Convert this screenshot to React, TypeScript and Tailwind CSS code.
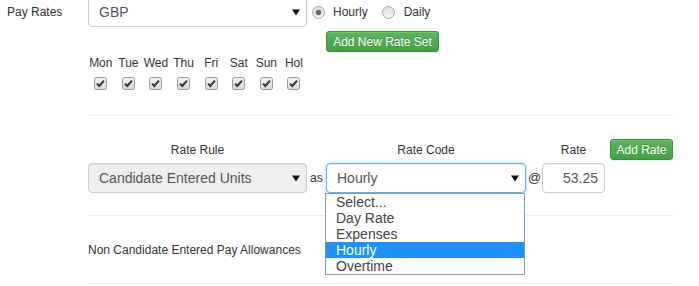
import React from "react";

const Arrow = () => (
  <svg width="8" height="7" viewBox="0 0 8 7" className="shrink-0">
    <polygon points="0,0.5 8,0.5 4,6.5" fill="#111" />
  </svg>
);

const Check = () => (
  <svg width="13" height="13" viewBox="0 0 13 13" className="block">
    <defs>
      <linearGradient id="cbg" x1="0" y1="0" x2="0" y2="1">
        <stop offset="0" stopColor="#f4f4f4" />
        <stop offset="1" stopColor="#d8d8d8" />
      </linearGradient>
    </defs>
    <rect x="0.5" y="0.5" width="12" height="12" rx="2" fill="url(#cbg)" stroke="#9a9a9a" />
    <path d="M3 6.6 L5.3 9 L10 3.6" fill="none" stroke="#333" strokeWidth="2" />
  </svg>
);

const Radio = ({ checked }: { checked?: boolean }) => (
  <svg width="13" height="13" viewBox="0 0 13 13" className="block shrink-0">
    <defs>
      <linearGradient id="rbg" x1="0" y1="0" x2="0" y2="1">
        <stop offset="0" stopColor="#dcdcdc" />
        <stop offset="1" stopColor="#f6f6f6" />
      </linearGradient>
    </defs>
    <circle cx="6.5" cy="6.5" r="6" fill="url(#rbg)" stroke="#a9a9a9" />
    {checked && <circle cx="6.5" cy="6.5" r="2.8" fill="#6a6a6a" />}
  </svg>
);

const GreenButton = ({ children, className }: { children: React.ReactNode; className?: string }) => (
  <div
    className={
      "flex items-center justify-center h-[21px] rounded-[3px] border border-[#3e8f3e] bg-gradient-to-b from-[#5cb85c] to-[#43a043] text-white text-[12px] shadow-[inset_0_1px_0_rgba(255,255,255,0.15),0_1px_1px_rgba(0,0,0,0.075)] [text-shadow:0_-1px_0_rgba(0,0,0,0.2)] " +
      (className ?? "")
    }
  >
    {children}
  </div>
);

const days = ["Mon", "Tue", "Wed", "Thu", "Fri", "Sat", "Sun", "Hol"];
const options = ["Select...", "Day Rate", "Expenses", "Hourly", "Overtime"];

export default function App() {
  return (
    <div className="w-[699px] h-[286px] overflow-hidden bg-white text-[#333] font-['Liberation_Sans',Arial,sans-serif]">
      <div className="flex">
        <div className="w-[88px] shrink-0 pl-[7px] text-[12px] leading-[14px] pt-[5px]">Pay Rates</div>
        <div className="w-[585px] shrink-0">
          {/* Row 1 */}
          <div className="flex -mt-[3px]">
            <div className="w-[219px] h-[30px] rounded-[4px] border border-[#ccc] bg-white shadow-[inset_0_1px_1px_rgba(0,0,0,0.075)] flex items-center justify-between pl-[10px] pr-[6px] text-[14px] text-[#555]">
              <span>GBP</span>
              <Arrow />
            </div>
            <div className="ml-[5px]">
              <div className="h-[30px] flex items-center text-[12px]">
                <Radio checked />
                <span className="ml-[8px]">Hourly</span>
                <span className="ml-[14px]">
                  <Radio />
                </span>
                <span className="ml-[9px]">Daily</span>
              </div>
              <GreenButton className="mt-[4px] ml-[14px] w-[113px]">Add New Rate Set</GreenButton>
            </div>
          </div>

          {/* Days */}
          <div className="flex mt-[4px] -ml-[1px]">
            {days.map((d) => (
              <div key={d} className="w-[27.6px] flex flex-col items-center">
                <div className="text-[12px] leading-[14px]">{d}</div>
                <div className="mt-[7px]">
                  <Check />
                </div>
              </div>
            ))}
          </div>

          <div className="mt-[25px] h-px bg-[#eee]" />

          {/* Header row */}
          <div className="flex items-center mt-[23px] text-[12px]">
            <div className="w-[219px] text-center">Rate Rule</div>
            <div className="w-[200px] ml-[19px] text-center">Rate Code</div>
            <div className="w-[63px] ml-[16px] text-center">Rate</div>
            <GreenButton className="ml-[5px] w-[63px]">Add Rate</GreenButton>
          </div>

          {/* Inputs row */}
          <div className="flex items-center mt-[3px]">
            <div className="w-[219px] h-[30px] rounded-[4px] border border-[#ccc] bg-[#eee] shadow-[inset_0_1px_1px_rgba(0,0,0,0.075)] flex items-center justify-between pl-[10px] pr-[6px] text-[14px] text-[#555]">
              <span>Candidate Entered Units</span>
              <Arrow />
            </div>
            <span className="w-[19px] pl-[3px] text-[12px]">as</span>
            <div className="relative w-[200px] h-[30px]">
              <div className="w-full h-full rounded-[4px] border border-[#66afe9] bg-white shadow-[inset_0_1px_1px_rgba(0,0,0,0.075),0_0_4px_rgba(102,175,233,0.5)] flex items-center justify-between pl-[10px] pr-[6px] text-[14px] text-[#555]">
                <span>Hourly</span>
                <Arrow />
              </div>
              <div className="absolute left-[-1px] top-[30px] w-[200px] border border-[#7f9db9] bg-white z-10">
                {options.map((o) => (
                  <div
                    key={o}
                    className={
                      "h-[16px] leading-[16px] pl-[10px] text-[14px] " +
                      (o === "Hourly" ? "bg-[#1e90ff] text-white" : "text-[#444]")
                    }
                  >
                    {o}
                  </div>
                ))}
              </div>
            </div>
            <span className="w-[16px] pl-[2px] text-[13px]">@</span>
            <div className="w-[63px] h-[30px] rounded-[4px] border border-[#ccc] bg-white shadow-[inset_0_1px_1px_rgba(0,0,0,0.075)] flex items-center justify-end pr-[6px] text-[14px] text-[#555]">
              53.25
            </div>
          </div>

          <div className="mt-[22px] h-px bg-[#eee]" />

          <div className="h-[67px] flex items-center text-[12px]">Non Candidate Entered Pay Allowances</div>

          <div className="h-px bg-[#eee]" />
        </div>
      </div>
    </div>
  );
}
